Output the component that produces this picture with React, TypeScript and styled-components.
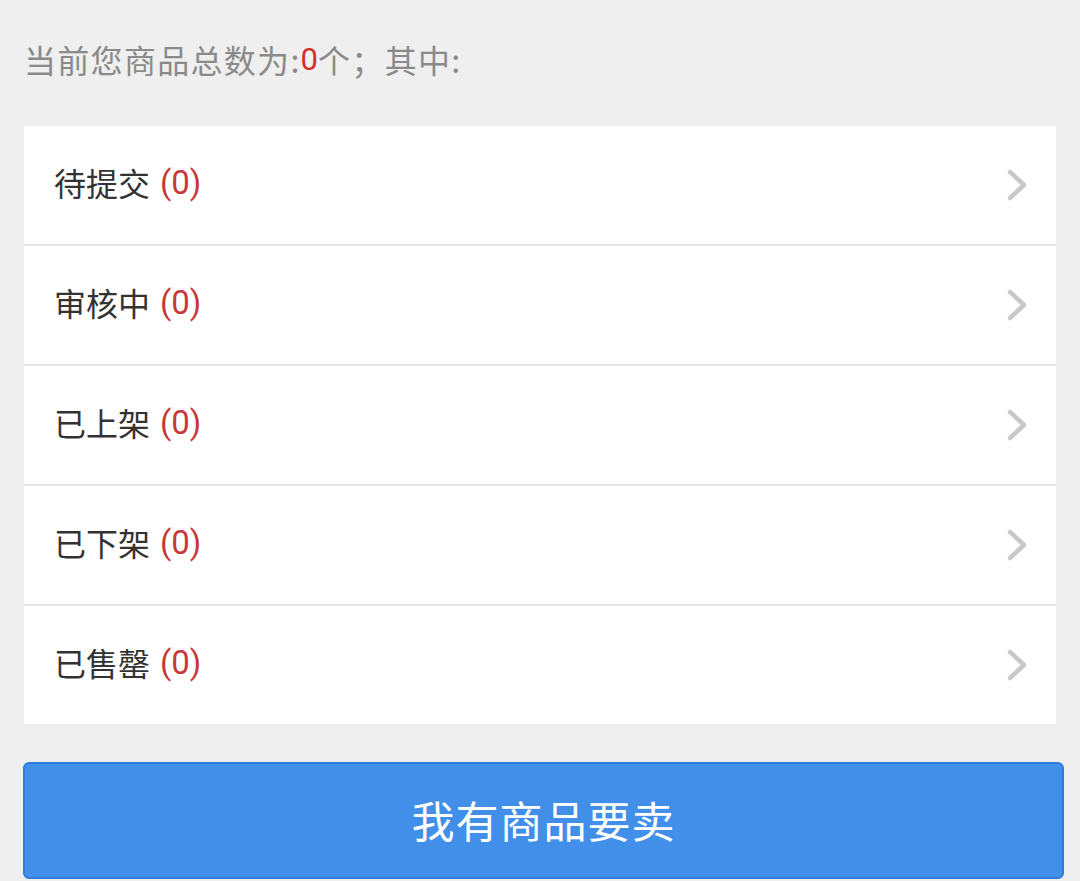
import React from "react";
import styled, { createGlobalStyle } from "styled-components";

const Global = createGlobalStyle`
  html, body { margin: 0; padding: 0; background: #efefef; }
  body { font-family: "Noto Sans CJK SC", "Noto Sans", sans-serif; }
`;

const Page = styled.div`
  width: 1080px;
  height: 881px;
  overflow: hidden;
  background: #efefef;
  box-sizing: border-box;
  padding: 0 16px 0 23px;
  display: flex;
  flex-direction: column;
`;

const Summary = styled.div`
  height: 126px;
  display: flex;
  align-items: center;
  padding-left: 1px;
  padding-bottom: 8px;
  box-sizing: border-box;
  font-size: 32px;
  color: #8a8a8a;
  letter-spacing: 1.3px;
`;

const Red = styled.span`
  color: #d0312d;
  font-family: "Roboto", "Noto Sans", sans-serif;
  font-size: 31px;
  letter-spacing: 0;
`;

const List = styled.div`
  margin-left: 1px;
  width: 1032px;
  display: flex;
  flex-direction: column;
  gap: 2px;
  background: #e6e6e6;
`;

const Row = styled.div`
  height: 118px;
  background: #fff;
  display: flex;
  align-items: center;
  justify-content: space-between;
  padding: 0 26px 6px 30px;
  box-sizing: border-box;
`;

const Label = styled.div`
  font-size: 32px;
  color: #333;
  display: flex;
  align-items: center;
  gap: 10px;
`;

const Count = styled.span`
  color: #c8373a;
  font-family: "Roboto", "Noto Sans", sans-serif;
  font-size: 33px;
`;

const ChevronSvg = styled.svg`
  margin-top: 8px;
  flex: none;
`;

const Button = styled.button`
  margin-top: 38px;
  width: 1041px;
  height: 117px;
  background: #418fe9;
  border: 2px solid #2f7dd8;
  border-radius: 6px;
  color: #fff;
  font-family: "Noto Sans CJK SC", sans-serif;
  font-size: 43px;
  letter-spacing: 1px;
  display: flex;
  align-items: center;
  justify-content: center;
  padding: 0 0 4px 0;
  box-sizing: border-box;
`;

const Chevron = () => (
  <ChevronSvg width="26" height="36" viewBox="0 0 26 36">
    <path d="M6 4 L20 17 L6 30" fill="none" stroke="#c8c8c8" strokeWidth="4.5" strokeLinecap="round" strokeLinejoin="round" />
  </ChevronSvg>
);

const items = ["待提交", "审核中", "已上架", "已下架", "已售罄"];

export default function App() {
  return (
    <Page>
      <Global />
      <Summary>
        当前您商品总数为:<Red>0</Red>个；其中:
      </Summary>
      <List>
        {items.map((t) => (
          <Row key={t}>
            <Label>
              {t}
              <Count>(0)</Count>
            </Label>
            <Chevron />
          </Row>
        ))}
      </List>
      <Button>我有商品要卖</Button>
    </Page>
  );
}
